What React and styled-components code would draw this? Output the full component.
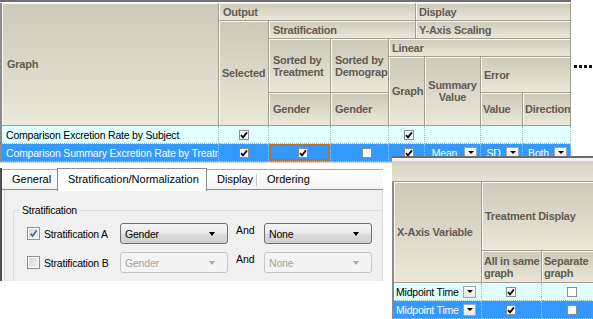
import React from 'react';
import styled, { createGlobalStyle, css } from 'styled-components';

const GlobalStyle = createGlobalStyle`
  html, body { margin: 0; padding: 0; background: #fff; overflow: hidden; }
  #root { width: 593px; height: 319px; }
`;

const Canvas = styled.div`
  position: relative;
  width: 593px;
  height: 319px;
  overflow: hidden;
  background: #fff;
  font-family: "Liberation Sans", Arial, sans-serif;
`;

/* ---------- floating screenshots on the canvas ---------- */
const MainWindow = styled.div`
  position: absolute;
  left: 0;
  top: 0;
  width: 571px;
  border-top: 2px solid #6f6f6f;
  border-bottom: 1px solid #d0d0d0;
  padding-top: 1px;
  background: #fff;
`;

const SideWindow = styled.div`
  position: absolute;
  left: 392px;
  top: 156px;
  width: 201px;
  height: 163px;
  overflow: hidden;
  border-top: 2px solid #6b6b6b;
  padding-top: 3px;
  background: #f3f3f3;
`;

const TabWindow = styled.div`
  position: absolute;
  left: 0;
  top: 168px;
  width: 381px;
  height: 113px;
  border-left: 2px solid #4f4f4f;
  display: flex;
  flex-direction: column;
  background: #fff;
`;

const Connector = styled.div`
  position: absolute;
  left: 574px;
  top: 65px;
  width: 19px;
  height: 3px;
  background: repeating-linear-gradient(to right, #111 0 3px, transparent 3px 5px);
`;

/* ---------- banded grid ---------- */
const BandGrid = styled.div`
  display: grid;
  grid-template-columns: ${p => p.$cols};
  grid-template-rows: ${p => p.$rows};
  border-left: 2px solid #8b8b8b;
`;

const HeadCell = styled.div`
  grid-column: ${p => p.$col};
  grid-row: ${p => p.$row};
  display: flex;
  align-items: center;
  justify-content: ${p => (p.$center ? 'center' : 'flex-start')};
  text-align: ${p => (p.$center ? 'center' : 'left')};
  padding: 0 1px 0 ${p => p.$pad ?? 4}px;
  overflow: hidden;
  white-space: nowrap;
  background: linear-gradient(#cdc9b8, #ebe7d9);
  border-right: 1px solid #a19e92;
  border-bottom: 1px solid #a19e92;
  box-shadow: inset 1px 1px 0 #fbfaf4;
  color: #5f5c50;
  font: bold 11px/12px "Liberation Sans", Arial, sans-serif;
  letter-spacing: -0.25px;
`;

const DataCell = styled.div`
  grid-column: ${p => p.$col};
  grid-row: ${p => p.$row};
  display: flex;
  align-items: center;
  justify-content: ${p => p.$align || 'center'};
  padding-left: ${p => p.$padL ?? 0}px;
  overflow: hidden;
  white-space: nowrap;
  background: ${p => (p.$sel ? '#3399ff' : '#e0ffff')};
  color: ${p => (p.$sel ? '#fff' : '#000')};
  border-right: 1px dotted ${p => (p.$sel ? '#9cc8f2' : '#a9b9b9')};
  border-bottom: 1px dotted ${p => (p.$sel ? '#9cc8f2' : '#a9b9b9')};
  font-size: 10.5px;
  letter-spacing: -0.2px;
  ${p =>
    p.$active &&
    css`
      box-shadow: inset 0 0 0 2px #b7722f;
    `}
`;

const GridBox = styled.span`
  width: 10px;
  height: 10px;
  box-sizing: border-box;
  border: 1px solid #8d8d8d;
  background: #fff;
  display: flex;
  align-items: center;
  justify-content: center;
  margin-left: ${p => p.$shift ?? 0}px;
`;

const GridCheck = ({ checked, shift }) => (
  <GridBox $shift={shift}>
    {checked && (
      <svg width="8" height="8" viewBox="0 0 8 8">
        <path d="M1 4.2 L3 6.3 L7 1.4" fill="none" stroke="#000" strokeWidth="1.8" />
      </svg>
    )}
  </GridBox>
);

const DropText = styled.span`
  flex: 1;
  text-align: ${p => p.$left ? 'left' : 'center'};
`;

const DropButton = styled.span`
  flex: none;
  width: 13px;
  height: 12px;
  box-sizing: border-box;
  margin-right: ${p => p.$mr ?? 3}px;
  border: 1px solid #a3a3a3;
  background: linear-gradient(#ffffff, #e8e8e8);
  display: flex;
  align-items: center;
  justify-content: center;
  &::after {
    content: '';
    border-left: 3px solid transparent;
    border-right: 3px solid transparent;
    border-top: 3px solid #000;
  }
`;

const DropValue = ({ text }) => (
  <>
    <DropText>{text}</DropText>
    <DropButton />
  </>
);

const mainRows = [
  { name: 'Comparison Excretion Rate by Subject', selected: false, output: true, graph: true },
  {
    name: 'Comparison Summary Excretion Rate by Treatment',
    selected: true,
    output: true,
    byTreatment: true,
    byDemo: false,
    graph: true,
    summary: 'Mean',
    value: 'SD',
    direction: 'Both',
  },
];

const MainRow = ({ row, r }) => {
  const s = row.selected;
  return (
    <>
      <DataCell $col="1" $row={r} $sel={s} $align="flex-start" $padL={4}>{row.name}</DataCell>
      <DataCell $col="2" $row={r} $sel={s}>{row.output && <GridCheck checked />}</DataCell>
      <DataCell $col="3" $row={r} $sel={s} $active={s}>
        {row.byTreatment !== undefined && <GridCheck checked={row.byTreatment} shift={7} />}
      </DataCell>
      <DataCell $col="4" $row={r} $sel={s}>
        {row.byDemo !== undefined && <GridCheck checked={row.byDemo} shift={14} />}
      </DataCell>
      <DataCell $col="5 / 7" $row={r} $sel={s}>{row.graph && <GridCheck checked shift={4} />}</DataCell>
      <DataCell $col="7" $row={r} $sel={s}>{row.summary && <DropValue text={row.summary} />}</DataCell>
      <DataCell $col="8" $row={r} $sel={s}>{row.value && <DropValue text={row.value} />}</DataCell>
      <DataCell $col="9" $row={r} $sel={s}>{row.direction && <DropValue text={row.direction} />}</DataCell>
    </>
  );
};

const sideRows = [
  { selected: false, same: true, separate: false },
  { selected: true, same: true, separate: false },
];

const SideRow = ({ row, r }) => (
  <>
    <DataCell $col="1" $row={r} $sel={row.selected} $align="flex-start" $padL={2}>
      <DropText $left>Midpoint Time</DropText>
      <DropButton $mr={5} />
    </DataCell>
    <DataCell $col="2" $row={r} $sel={row.selected}><GridCheck checked={row.same} shift={-2} /></DataCell>
    <DataCell $col="3" $row={r} $sel={row.selected}><GridCheck checked={row.separate} /></DataCell>
  </>
);

const GroupByBand = styled.div`
  height: 20px;
  background: linear-gradient(#d6d2c2, #e5e1d3);
  border-bottom: 1px solid #a19e92;
`;

/* ---------- tab page ---------- */
const TabStrip = styled.div`
  display: flex;
  align-items: flex-end;
  height: 22px;
  position: relative;
  z-index: 1;
`;

const Tab = styled.div`
  position: relative;
  box-sizing: border-box;
  height: ${p => (p.$active ? 23 : 21)}px;
  width: ${p => (p.$width ? `${p.$width}px` : 'auto')};
  flex: ${p => (p.$width ? 'none' : 1)};
  margin-bottom: ${p => (p.$active ? -1 : 0)}px;
  padding: ${p => (p.$active ? '0 0 3px 10px' : '0 0 1px 10px')};
  display: flex;
  align-items: center;
  font-size: 11px;
  color: #000;
  white-space: nowrap;
  ${p =>
    p.$active
      ? css`
          background: #fff;
          border: 1px solid #898c95;
          border-bottom: none;
        `
      : css`
          background: linear-gradient(#ffffff, #f4f4f4);
          border-top: 1px solid #a9a9a9;
          border-bottom: 1px solid #898c95;
        `}
  ${p =>
    p.$divider &&
    css`
      &::after {
        content: '';
        position: absolute;
        right: 0;
        top: 4px;
        bottom: 3px;
        width: 1px;
        background: #c6c6c6;
      }
    `}
`;

const TabBody = styled.div`
  flex: 1;
  overflow: hidden;
  background: #f0f0f0;
  border-right: 1px solid #d9d9d9;
  box-shadow: inset 2px 0 0 #f7f7f7, inset 3px 0 0 #d6d6d6;
  padding: 14px 0 0 11px;
`;

const GroupBox = styled.fieldset`
  margin: 0;
  padding: 0 0 0 13px;
  border: 1px solid #d5dfe5;
  border-right: none;
  border-radius: 3px 0 0 3px;
  height: 120px;
  box-sizing: border-box;
`;

const GroupTitle = styled.legend`
  margin-left: -7px;
  padding: 0 2px;
  font-size: 10.5px;
  line-height: 12px;
  color: #000;
  letter-spacing: -0.2px;
`;

const OptionRow = styled.div`
  display: flex;
  align-items: center;
  height: 21px;
  margin-top: ${p => (p.$first ? 7 : 8)}px;
`;

const CheckLabel = styled.label`
  width: 93px;
  flex: none;
  display: flex;
  align-items: center;
  gap: 4px;
  font-size: 10.5px;
  letter-spacing: -0.2px;
  color: #000;
`;

const WinBox = styled.span`
  width: 13px;
  height: 13px;
  box-sizing: border-box;
  border: 1px solid #8e8f8f;
  background: linear-gradient(135deg, #cfd2d6, #f8f8f8);
  box-shadow: inset 0 0 0 1px #fdfdfd;
  display: flex;
  align-items: center;
  justify-content: center;
`;

const WinCheck = ({ checked }) => (
  <WinBox>
    {checked && (
      <svg width="9" height="9" viewBox="0 0 9 9">
        <path d="M1.5 4.8 L3.6 7 L7.6 1.6" fill="none" stroke="#3f5f9e" strokeWidth="1.6" />
      </svg>
    )}
  </WinBox>
);

const Combo = styled.div`
  width: 108px;
  height: 21px;
  flex: none;
  box-sizing: border-box;
  display: flex;
  align-items: center;
  justify-content: space-between;
  padding: 0 12px 0 4px;
  border-radius: 3px;
  font-size: 10.5px;
  letter-spacing: -0.2px;
  ${p =>
    p.$disabled
      ? css`
          border: 1px solid #c6c6c6;
          background: #f4f4f4;
          color: #a3a3a3;
        `
      : css`
          border: 1px solid #707070;
          background: linear-gradient(#f3f3f3 0%, #ebebeb 48%, #dddddd 52%, #cfcfcf 100%);
          color: #000;
        `}
  &::after {
    content: '';
    border-left: 3.5px solid transparent;
    border-right: 3.5px solid transparent;
    border-top: 4px solid ${p => (p.$disabled ? '#a8a8a8' : '#000')};
  }
`;

const AndLabel = styled.span`
  width: 20px;
  margin: 0 8px;
  align-self: flex-start;
  margin-top: 1px;
  font-size: 10.5px;
  line-height: 12px;
  color: #000;
`;

const stratRows = [
  { label: 'Stratification A', checked: true, first: 'Gender', second: 'None' },
  { label: 'Stratification B', checked: false, first: 'Gender', second: 'None' },
];

export default function App() {
  return (
    <Canvas>
      <GlobalStyle />

      <MainWindow>
        <BandGrid
          $cols="217px 50px 62px 58px 27px 9px 56px 42px 48px"
          $rows="18px 18px 18px 36px 33px 18px 18px"
        >
          <HeadCell $col="1" $row="1 / 6" $pad={5}>Graph</HeadCell>
          <HeadCell $col="2 / 6" $row="1">Output</HeadCell>
          <HeadCell $col="6 / 10" $row="1" $pad={3}>Display</HeadCell>
          <HeadCell $col="2" $row="2 / 6" $pad={3}>Selected</HeadCell>
          <HeadCell $col="3 / 6" $row="2">Stratification</HeadCell>
          <HeadCell $col="6 / 10" $row="2" $pad={3}>Y-Axis Scaling</HeadCell>
          <HeadCell $col="3" $row="3 / 5">
            <div>Sorted by<br />Treatment</div>
          </HeadCell>
          <HeadCell $col="4" $row="3 / 5">
            <div>Sorted by<br />Demograp</div>
          </HeadCell>
          <HeadCell $col="5 / 10" $row="3" $pad={3}>Linear</HeadCell>
          <HeadCell $col="5 / 7" $row="4 / 6" $pad={3}>Graph</HeadCell>
          <HeadCell $col="7" $row="4 / 6" $center $pad={1}>
            <div>Summary<br />Value</div>
          </HeadCell>
          <HeadCell $col="8 / 10" $row="4" $pad={3}>Error</HeadCell>
          <HeadCell $col="3" $row="5">Gender</HeadCell>
          <HeadCell $col="4" $row="5">Gender</HeadCell>
          <HeadCell $col="8" $row="5" $pad={2}>Value</HeadCell>
          <HeadCell $col="9" $row="5" $pad={2}>Direction</HeadCell>
          {mainRows.map((row, i) => (
            <MainRow key={i} row={row} r={6 + i} />
          ))}
        </BandGrid>
      </MainWindow>

      <Connector />

      <TabWindow>
        <TabStrip>
          <Tab $width={55}>General</Tab>
          <Tab $width={150} $active>Stratification/Normalization</Tab>
          <Tab $width={50} $divider>Display</Tab>
          <Tab>Ordering</Tab>
        </TabStrip>
        <TabBody>
          <GroupBox>
            <GroupTitle>Stratification</GroupTitle>
            {stratRows.map((row, i) => (
              <OptionRow key={row.label} $first={i === 0}>
                <CheckLabel>
                  <WinCheck checked={row.checked} />
                  {row.label}
                </CheckLabel>
                <Combo $disabled={!row.checked}>{row.first}</Combo>
                <AndLabel>And</AndLabel>
                <Combo $disabled={!row.checked}>{row.second}</Combo>
              </OptionRow>
            ))}
          </GroupBox>
        </TabBody>
      </TabWindow>

      <SideWindow>
        <GroupByBand />
        <BandGrid $cols="88px 60px 60px" $rows="69px 32px 18px 18px">
          <HeadCell $col="1" $row="1 / 3" $pad={3}>X-Axis Variable</HeadCell>
          <HeadCell $col="2 / 4" $row="1" $pad={3}>Treatment Display</HeadCell>
          <HeadCell $col="2" $row="2" $pad={2}>
            <div>All in same<br />graph</div>
          </HeadCell>
          <HeadCell $col="3" $row="2" $pad={2}>
            <div>Separate<br />graph</div>
          </HeadCell>
          {sideRows.map((row, i) => (
            <SideRow key={i} row={row} r={3 + i} />
          ))}
        </BandGrid>
      </SideWindow>
    </Canvas>
  );
}
